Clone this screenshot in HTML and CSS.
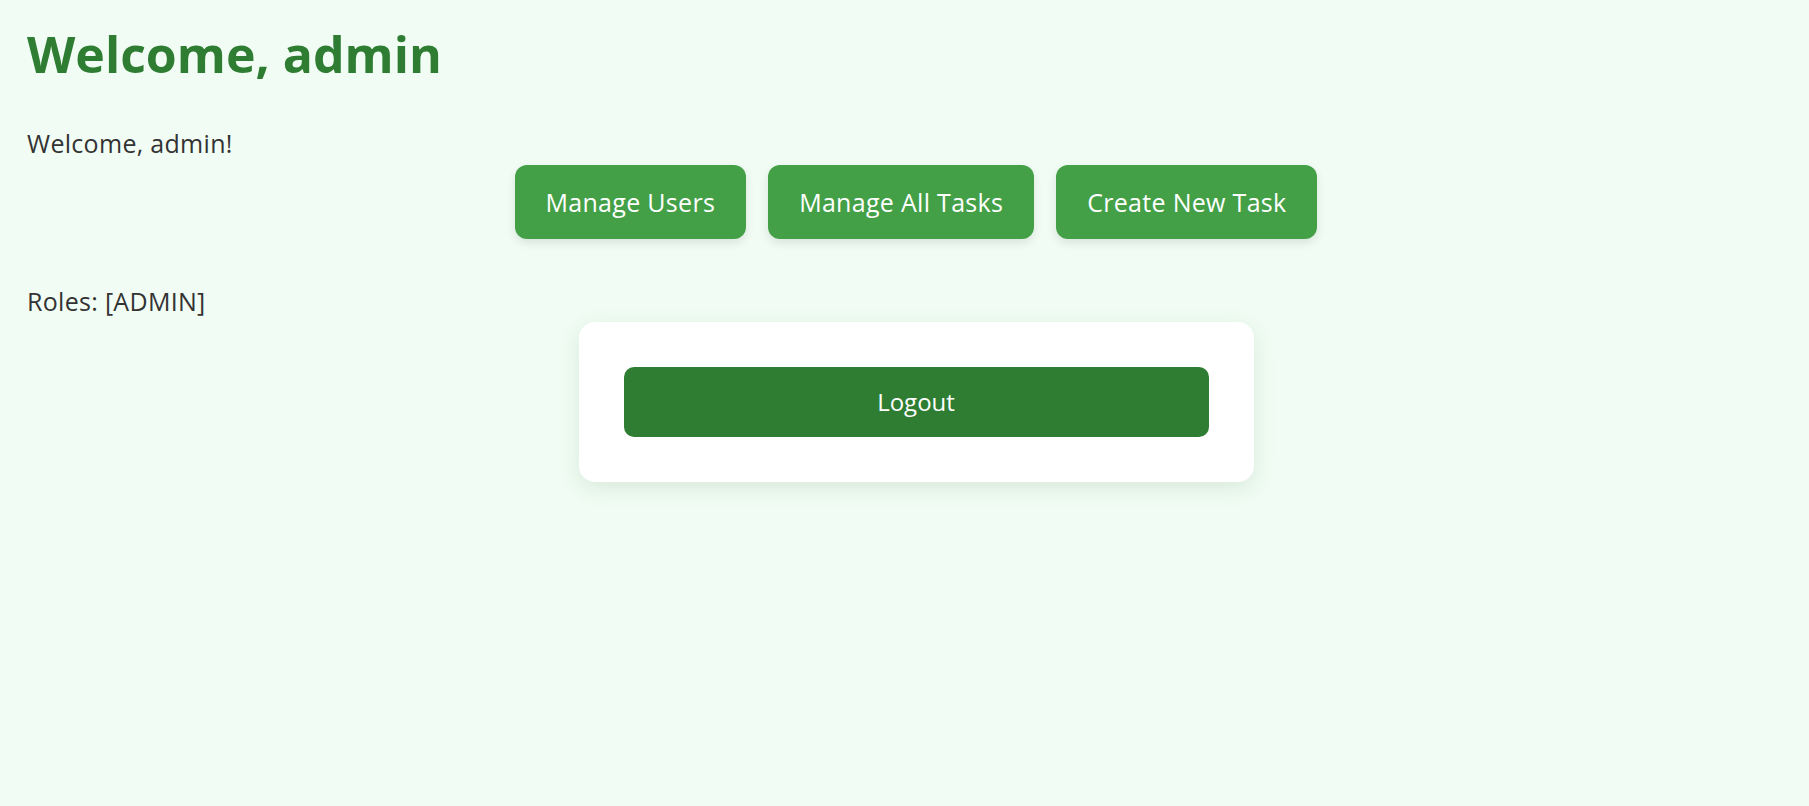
FILE: index.html
```html
<!DOCTYPE html>
<html lang="en">
<head>
<meta charset="utf-8">
<title>Dashboard</title>
<link rel="stylesheet" href="styles.css">
</head>
<body>
<div class="page">
  <h1 class="title">Welcome, admin</h1>
  <p class="text">Welcome, admin!</p>
  <div class="actions">
    <button class="btn">Manage Users</button>
    <button class="btn">Manage All Tasks</button>
    <button class="btn">Create New Task</button>
  </div>
  <p class="text roles">Roles: [ADMIN]</p>
  <div class="card">
    <button class="logout">Logout</button>
  </div>
</div>
</body>
</html>
```

FILE: styles.css
```css
html, body {
  margin: 0;
  padding: 0;
  background: #f1fdf4;
}

body {
  font-family: "Open Sans", "Noto Sans", sans-serif;
  color: #333333;
  min-height: 806px;
}

.page {
  padding: 17px 4px 0 27px;
}

.title {
  margin: 0 0 33px;
  font-size: 50px;
  line-height: 75px;
  font-weight: 700;
  color: #2e7d32;
}

.text {
  margin: 0;
  font-size: 25px;
  line-height: 37.5px;
  letter-spacing: 0.3px;
  color: #333333;
}

.actions {
  display: flex;
  justify-content: center;
  gap: 22px;
  margin-top: 2px;
}

.btn {
  font-family: inherit;
  font-size: 25px;
  line-height: 38px;
  padding: 18px 31px;
  border: none;
  border-radius: 12px;
  background: #43a047;
  color: #ffffff;
  letter-spacing: 0.3px;
  box-shadow: 0 4px 10px rgba(0, 0, 0, 0.1);
  cursor: pointer;
}

.roles {
  margin-top: 44px;
}

.card {
  width: 585px;
  margin: 2px auto 0;
  padding: 45px;
  background: #ffffff;
  border-radius: 16px;
  box-shadow: 0 6px 22px rgba(40, 80, 50, 0.12);
}

.logout {
  display: block;
  width: 100%;
  font-family: inherit;
  font-size: 24px;
  line-height: 36px;
  padding: 17px 0;
  border: none;
  border-radius: 10px;
  background: #2e7d32;
  color: #ffffff;
  cursor: pointer;
}
```
